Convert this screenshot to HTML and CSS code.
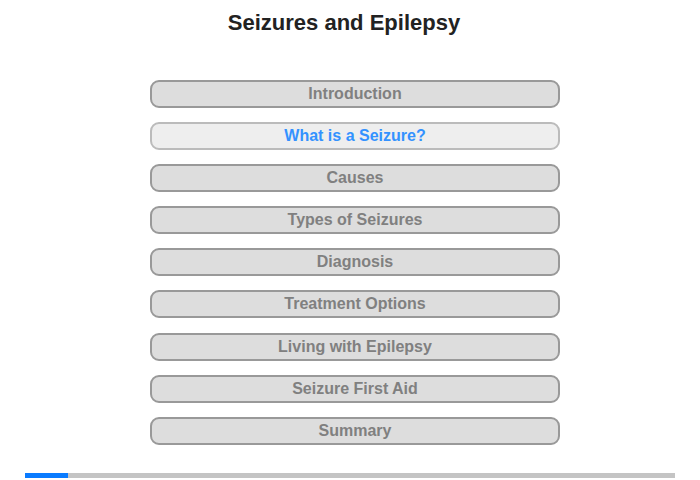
FILE: index.html
```html
<!DOCTYPE html>
<html lang="en">
<head>
  <meta charset="UTF-8" />
  <meta name="viewport" content="width=device-width, initial-scale=1.0" />
  <title>Seizures and Epilepsy</title>
  <link rel="stylesheet" href="styles.css">
</head>
<body>

  <h1>Seizures and Epilepsy</h1>

  <nav class="menu">
    <button class="menu-btn">Introduction</button>
    <button class="menu-btn active">What is a Seizure?</button>
    <button class="menu-btn">Causes</button>
    <button class="menu-btn">Types of Seizures</button>
    <button class="menu-btn">Diagnosis</button>
    <button class="menu-btn">Treatment Options</button>
    <button class="menu-btn">Living with Epilepsy</button>
    <button class="menu-btn">Seizure First Aid</button>
    <button class="menu-btn">Summary</button>
  </nav>

  <div class="progress">
    <div class="progress-fill" style="width: 43px;"></div>
  </div>

</body>
</html>
```

FILE: styles.css
```css
body {
  margin: 0;
  font-family: 'Liberation Sans', Arial, sans-serif;
  background-color: #fff;
  color: #222;
}

h1 {
  text-align: center;
  margin: 10px 0 0;
  padding-right: 12px;
  font-size: 22px;
  line-height: 25px;
  color: #222;
}

.menu {
  display: flex;
  flex-direction: column;
  align-items: center;
  gap: 14.1px;
  margin-top: 45px;
  padding-left: 10px;
}

.menu-btn {
  width: 410px;
  height: 28px;
  padding: 0;
  background: #ddd;
  border: 2px solid #999;
  border-radius: 9px;
  color: #808080;
  font-family: 'Liberation Sans', Arial, sans-serif;
  font-size: 16px;
  font-weight: bold;
  line-height: 24px;
  cursor: pointer;
}

.menu-btn.active {
  background: #eee;
  border-color: #bbb;
  color: #3392ff;
}

.progress {
  margin: 28px 25px 0;
  height: 5px;
  background: #c4c4c4;
}

.progress-fill {
  height: 100%;
  background: #0a7bff;
}
```
